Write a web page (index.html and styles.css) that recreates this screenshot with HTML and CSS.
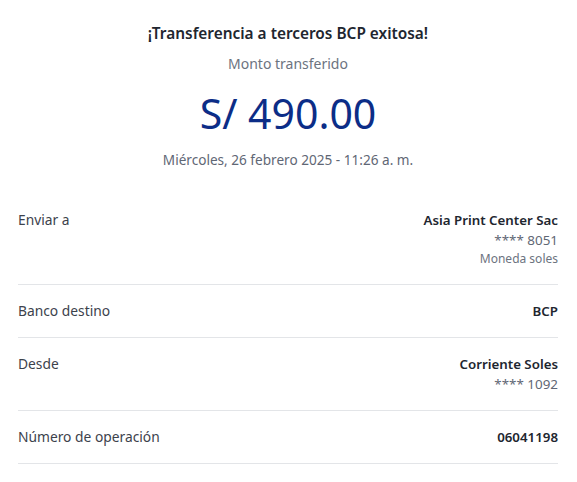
FILE: index.html
```html
<!DOCTYPE html>
<html lang="es">
<head>
<meta charset="utf-8">
<title>Transferencia exitosa</title>
<link rel="stylesheet" href="styles.css">
</head>
<body>
<main class="receipt">
  <header class="summary">
    <h1 class="title">¡Transferencia a terceros BCP exitosa!</h1>
    <p class="caption">Monto transferido</p>
    <p class="amount">S/ 490.00</p>
    <p class="date">Miércoles, 26 febrero 2025 - 11:26 a. m.</p>
  </header>
  <section class="details">
    <div class="row">
      <span class="label">Enviar a</span>
      <div class="value">
        <span class="strong">Asia Print Center Sac</span>
        <span class="sub">**** 8051</span>
        <span class="small">Moneda soles</span>
      </div>
    </div>
    <div class="row">
      <span class="label">Banco destino</span>
      <div class="value"><span class="strong">BCP</span></div>
    </div>
    <div class="row">
      <span class="label">Desde</span>
      <div class="value">
        <span class="strong">Corriente Soles</span>
        <span class="sub">**** 1092</span>
      </div>
    </div>
    <div class="row">
      <span class="label">Número de operación</span>
      <div class="value"><span class="strong">06041198</span></div>
    </div>
  </section>
</main>
</body>
</html>
```

FILE: styles.css
```css
* { box-sizing: border-box; }
html, body { margin: 0; padding: 0; background: #ffffff; }
body {
  font-family: "Noto Sans", "Open Sans", sans-serif;
  color: #2b3039;
}
.receipt {
  padding: 24px 19px 0 18px;
}
.summary {
  display: flex;
  flex-direction: column;
  align-items: center;
  padding-bottom: 24px;
}
.summary p, .summary h1 { margin: 0; }
.title {
  font-size: 15.4px;
  font-weight: 600;
  line-height: 20px;
  color: #21262f;
}
.caption {
  margin-top: 10px !important;
  font-size: 14px;
  line-height: 20px;
  color: #6c7380;
}
.amount {
  margin-top: 14px !important;
  font-size: 41px;
  line-height: 50px;
  font-weight: 400;
  color: #0c2d87;
}
.date {
  margin-top: 12px !important;
  font-size: 13.6px;
  line-height: 20px;
  color: #5f6775;
}
.details { display: flex; flex-direction: column; }
.row {
  display: flex;
  justify-content: space-between;
  align-items: flex-start;
  padding: 16px 0 16px;
  border-bottom: 1px solid #e3e5e8;
}
.label {
  font-size: 13.8px;
  line-height: 20px;
  color: #3c424c;
}
.value {
  display: flex;
  flex-direction: column;
  align-items: flex-end;
  text-align: right;
}
.strong {
  font-size: 13.3px;
  line-height: 20px;
  font-weight: 600;
  color: #21262f;
}
.sub {
  font-size: 13.4px;
  line-height: 20px;
  color: #5f6775;
}
.small {
  font-size: 12px;
  line-height: 18px;
  color: #6c7380;
}
```
